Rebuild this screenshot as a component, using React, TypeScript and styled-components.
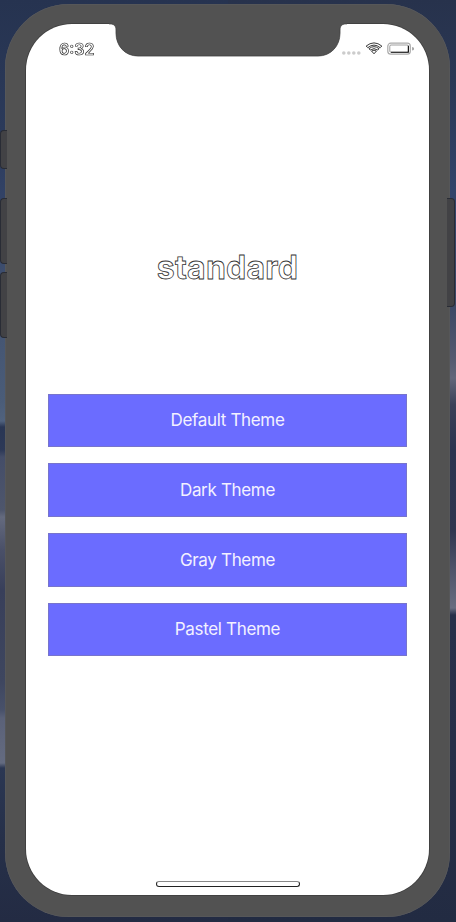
import React from "react";
import styled, { createGlobalStyle } from "styled-components";

const GlobalStyle = createGlobalStyle`
  *, *::before, *::after { box-sizing: border-box; }
  body { margin: 0; overflow: hidden; font-family: Inter, "Liberation Sans", sans-serif; }
`;

const Desktop = styled.main`
  position: relative;
  width: 456px;
  height: 922px;
  padding: 3.5px 6.5px 5.5px 5px;
  overflow: hidden;
  background:
    linear-gradient(#263350 0, #2b3a5a 130px, #34456a 220px, #425270 300px, #4a5c78 400px, #50627e 421px, #293654 427px, #2d3957 450px, #444d68 457px, #4e566c 510px, #646a7e 517px, #4a5068 550px, #383f5a 590px, #3e465f 680px, #48516a 710px, #5a6178 718px, #646b80 763px, #2b3753 768px, #263049 840px, #232b43 922px) left / 228px 100% no-repeat,
    linear-gradient(#27324c 0, #2a3754 80px, #32446a 190px, #3d4966 310px, #555a70 360px, #62667a 378px, #3a4058 405px, #2c3450 450px, #30364f 530px, #50546a 570px, #686d80 608px, #28304a 615px, #272f48 750px, #222b42 922px) right / 228px 100% no-repeat;
`;

const SideButton = styled.span<{ $side: "left" | "right"; $top: number; $height: number }>`
  position: absolute;
  top: ${({ $top }) => $top}px;
  ${({ $side }) => $side}: ${({ $side }) => ($side === "left" ? 0 : 1)}px;
  width: ${({ $side }) => ($side === "left" ? 7 : 8)}px;
  height: ${({ $height }) => $height}px;
  border: 1.5px solid #292c35;
  border-${({ $side }) => ($side === "left" ? "right" : "left")}: 0;
  border-radius: ${({ $side }) => ($side === "left" ? "4px 0 0 4px" : "0 4px 4px 0")};
  background: #424245;
`;

const Phone = styled.section`
  height: 100%;
  padding: 20.5px 20.5px 21.5px 21px;
  border-radius: 64px;
  background: #525252;
  box-shadow: inset 0 0 0 0.5px #5b5c60;
`;

const Screen = styled.div`
  position: relative;
  display: flex;
  flex-direction: column;
  height: 100%;
  border-radius: 46px;
  background: #fff;
  box-shadow: 0 0 0 0.8px #3d3d3d;
`;

const Notch = styled.svg`
  position: absolute;
  top: -2px;
  left: 83px;
  width: 238px;
  height: 35px;
`;

const StatusBar = styled.header`
  display: flex;
  justify-content: space-between;
  height: 44px;
  padding: 15px 15px 0 33px;
`;

const Clock = styled.time`
  width: 40px;
  font-size: 16px;
  font-weight: 600;
  line-height: 20px;
  color: #fff;
  -webkit-text-stroke: 0.65px #222;
  will-change: transform;
`;

const StatusIcons = styled.svg`
  width: 73px;
  height: 18px;
`;

const Content = styled.div`
  display: flex;
  flex: 1;
  flex-direction: column;
  padding: 178.5px 22px 0;
`;

const Title = styled.h1`
  margin: 0;
  height: 147px;
  font-size: 32px;
  font-weight: 700;
  line-height: 42px;
  letter-spacing: 0.25px;
  text-align: center;
  color: #fff;
  -webkit-text-stroke: 0.8px #333;
`;

const ThemeList = styled.div`
  display: flex;
  flex-direction: column;
  gap: 16px;
`;

const ThemeButton = styled.button`
  height: 53.7px;
  padding: 0;
  border: 1px solid #7774cc;
  border-radius: 0;
  background: #6b6cff;
  color: #f3f1ff;
  font: 400 17px/24px Inter, "Liberation Sans", sans-serif;
  letter-spacing: -0.33px;
`;

const HomeIndicator = styled.div`
  align-self: center;
  width: 144px;
  height: 6px;
  margin-bottom: 8.5px;
  border: 1px solid #222;
  border-top-color: #888;
  border-radius: 3px;
`;

const themes = ["Default", "Dark", "Gray", "Pastel"];

export default function App() {
  return (
    <>
      <GlobalStyle />
      <Desktop>
        <Phone>
          <Screen>
            <Notch viewBox="0 0 238 35" aria-hidden="true">
              <path d="M0 0V2H1C5 2 7 4 7 8V11C7 24 16 34 29 34H209C222 34 231 24 231 11V8C231 4 233 2 237 2H238V0Z" fill="#525252" />
              <path d="M0 1.9H1C5 1.9 7 4 7 8V11C7 24 16 34 29 34H209C222 34 231 24 231 11V8C231 4 233 1.9 237 1.9H238" fill="none" stroke="#404040" strokeWidth=".8" />
            </Notch>
            <StatusBar>
              <Clock>6:32</Clock>
              <StatusIcons viewBox="0 0 73 18" fill="none" aria-label="Signal, Wi-Fi and battery">
                <g fill="#ccc">
                  <circle cx="2.8" cy="14" r="1.8" />
                  <circle cx="7.8" cy="14" r="1.8" />
                  <circle cx="12.8" cy="14" r="1.8" />
                  <circle cx="17.8" cy="14" r="1.8" />
                </g>
                <g stroke="#222" strokeWidth=".9">
                  <path d="M25.2 7Q33 .8 40.8 7L39.2 8.7Q33 3.5 26.8 8.7Z" />
                  <path d="M28 9.7Q33 5.6 38 9.7L36.7 11.1Q33 8.1 29.3 11.1Z" />
                  <path d="M30.6 12.1Q33 10.2 35.4 12.1L33 14.8Z" />
                </g>
                <rect x="46.8" y="4.2" width="22.5" height="11" rx="3" stroke="#aaa" strokeWidth="1.2" />
                <rect x="48.8" y="6" width="18.5" height="7.3" rx="1.2" stroke="#777" strokeWidth=".7" />
                <path d="M50 13.3H67.4V6.7" stroke="#111" strokeWidth="1.1" />
                <path d="M71.2 8C73.5 8.2 73.5 11.4 71.2 11.6Z" fill="#999" />
              </StatusIcons>
            </StatusBar>
            <Content>
              <Title>standard</Title>
              <ThemeList>
                {themes.map((theme) => (
                  <ThemeButton key={theme}>{theme} Theme</ThemeButton>
                ))}
              </ThemeList>
            </Content>
            <HomeIndicator />
          </Screen>
        </Phone>
        <SideButton $side="left" $top={130} $height={39} />
        <SideButton $side="left" $top={198} $height={66} />
        <SideButton $side="left" $top={272} $height={66} />
        <SideButton $side="right" $top={198} $height={109} />
      </Desktop>
    </>
  );
}
